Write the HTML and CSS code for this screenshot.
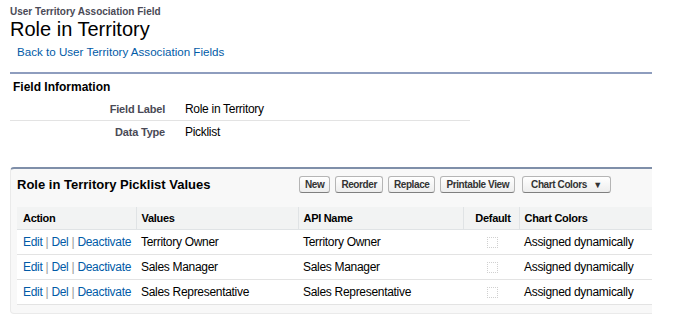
FILE: index.html
```html
<!DOCTYPE html>
<html lang="en">
<head>
<meta charset="utf-8">
<title>Role in Territory</title>
<link rel="stylesheet" href="styles.css">
</head>
<body>
<div class="page">
	<!-- page header -->
	<div class="page-header">
		<div class="page-type">User Territory Association Field</div>
		<h1 class="page-title">Role in Territory</h1>
		<a class="back-link" href="#">Back to User Territory Association Fields</a>
	</div>

	<!-- field information -->
	<div class="detail">
		<h2 class="detail__title">Field Information</h2>
		<table class="detail__list">
			<tr>
				<td class="detail__label">Field Label</td>
				<td class="detail__value">Role in Territory</td>
			</tr>
			<tr class="detail__last">
				<td class="detail__label">Data Type</td>
				<td class="detail__value">Picklist</td>
			</tr>
		</table>
	</div>

	<!-- picklist values -->
	<div class="related">
		<div class="related__header">
			<h3 class="related__title">Role in Territory Picklist Values</h3>
			<div class="related__buttons">
				<button class="btn">New</button>
				<button class="btn">Reorder</button>
				<button class="btn">Replace</button>
				<button class="btn">Printable View</button>
				<button class="btn btn--menu">Chart Colors <span class="caret">&#9660;</span></button>
			</div>
		</div>
		<table class="list">
			<thead>
				<tr>
					<th class="col-action">Action</th>
					<th class="col-value">Values</th>
					<th class="col-api">API Name</th>
					<th class="col-default">Default</th>
					<th class="col-color">Chart Colors</th>
				</tr>
			</thead>
			<tbody>
				<tr>
					<td class="col-action"><a href="#">Edit</a> | <a href="#">Del</a> | <a href="#">Deactivate</a></td>
					<td>Territory Owner</td>
					<td>Territory Owner</td>
					<td class="col-default"><span class="checkbox"></span></td>
					<td>Assigned dynamically</td>
				</tr>
				<tr>
					<td class="col-action"><a href="#">Edit</a> | <a href="#">Del</a> | <a href="#">Deactivate</a></td>
					<td>Sales Manager</td>
					<td>Sales Manager</td>
					<td class="col-default"><span class="checkbox"></span></td>
					<td>Assigned dynamically</td>
				</tr>
				<tr>
					<td class="col-action"><a href="#">Edit</a> | <a href="#">Del</a> | <a href="#">Deactivate</a></td>
					<td>Sales Representative</td>
					<td>Sales Representative</td>
					<td class="col-default"><span class="checkbox"></span></td>
					<td>Assigned dynamically</td>
				</tr>
			</tbody>
		</table>
	</div>
</div>
</body>
</html>
```

FILE: styles.css
```css
/* base */
body {
	margin: 0;
	background: #fff;
	color: #000;
	font-family: "Liberation Sans", Arial, sans-serif;
	font-size: 12px;
}
a {
	color: #015ba7;
	text-decoration: none;
}
.page {
	width: 642px;
	padding: 0 10px;
}

/* page header */
.page-header {
	padding-top: 6px;
}
.page-type {
	font-size: 10px;
	font-weight: bold;
	color: #4a4a56;
	line-height: 12px;
}
.page-title {
	margin: 0;
	font-size: 20px;
	font-weight: normal;
	line-height: 22px;
}
.back-link {
	display: block;
	margin: 5px 0 0 7px;
	font-size: 11.6px;
	line-height: 14px;
}

/* field information */
.detail {
	margin-top: 13px;
	border-top: 2px solid #8e9dbe;
}
.detail__title {
	margin: 0;
	padding: 6px 3px 4px;
	font-size: 12px;
	font-weight: bold;
	line-height: 14px;
}
.detail__list {
	width: 460px;
	border-collapse: collapse;
}
.detail__list td {
	height: 22px;
	padding: 0;
	border-bottom: 1px solid #e3e3e3;
	vertical-align: middle;
}
.detail__last td {
	border-bottom: none;
}
.detail__label {
	width: 155px;
	padding-right: 20px !important;
	text-align: right;
	font-size: 11px;
	font-weight: bold;
	color: #4a4a56;
	letter-spacing: -0.2px;
}
.detail__value {
	letter-spacing: -0.3px;
}

/* related list */
.related {
	margin-top: 24px;
	padding: 0 0 8px 6px;
	background: #f8f8f8;
	border: 1px solid #eaeaea;
	border-right: none;
	border-top: 2px solid #7f8fa9;
	border-radius: 4px 0 0 4px;
}
.related__header {
	display: flex;
	align-items: center;
	height: 31px;
}
.related__title {
	margin: 0;
	width: 282px;
	font-size: 13px;
	font-weight: bold;
}
.related__buttons {
	display: flex;
	gap: 5px;
}
.btn {
	height: 17px;
	padding: 0 5px;
	border: 1px solid #b5b5b5;
	border-bottom-color: #7f7f7f;
	border-radius: 3px;
	background: linear-gradient(#fff, #ededed);
	color: #333;
	font-family: "Liberation Sans", Arial, sans-serif;
	font-size: 10px;
	font-weight: bold;
	letter-spacing: -0.4px;
}
.btn--menu {
	margin-left: 2px;
	padding: 0 8px;
}
.caret {
	margin-left: 4px;
	font-size: 9px;
}

/* list table */
.list {
	width: 100%;
	table-layout: fixed;
	border-collapse: collapse;
	background: #fff;
	margin-top: 7px;
}
.list th,
.list td {
	box-sizing: border-box;
	padding: 0 5px;
	white-space: nowrap;
	overflow: hidden;
	letter-spacing: -0.3px;
}
.list th {
	height: 22px;
	background: #f2f3f3;
	border-bottom: 1px solid #e0e3e5;
	border-left: 1px solid #e0e3e5;
	text-align: left;
	font-size: 11px;
	font-weight: bold;
	color: #000;
}
.list th:first-child {
	border-left: none;
}
.list td {
	height: 25px;
	border-bottom: 1px solid #e3e3e3;
}
.list .col-action {
	width: 119px;
	padding-left: 6px;
}
.list .col-value {
	width: 162px;
}
.list .col-api {
	width: 165px;
}
.list .col-default {
	width: 56px;
	text-align: right;
	padding-right: 8px;
}
.list td.col-action {
	color: #999;
}
.checkbox {
	display: inline-block;
	width: 9px;
	height: 9px;
	margin-right: 13px;
	border: 1px dotted #d0d0d0;
	vertical-align: middle;
}
```
